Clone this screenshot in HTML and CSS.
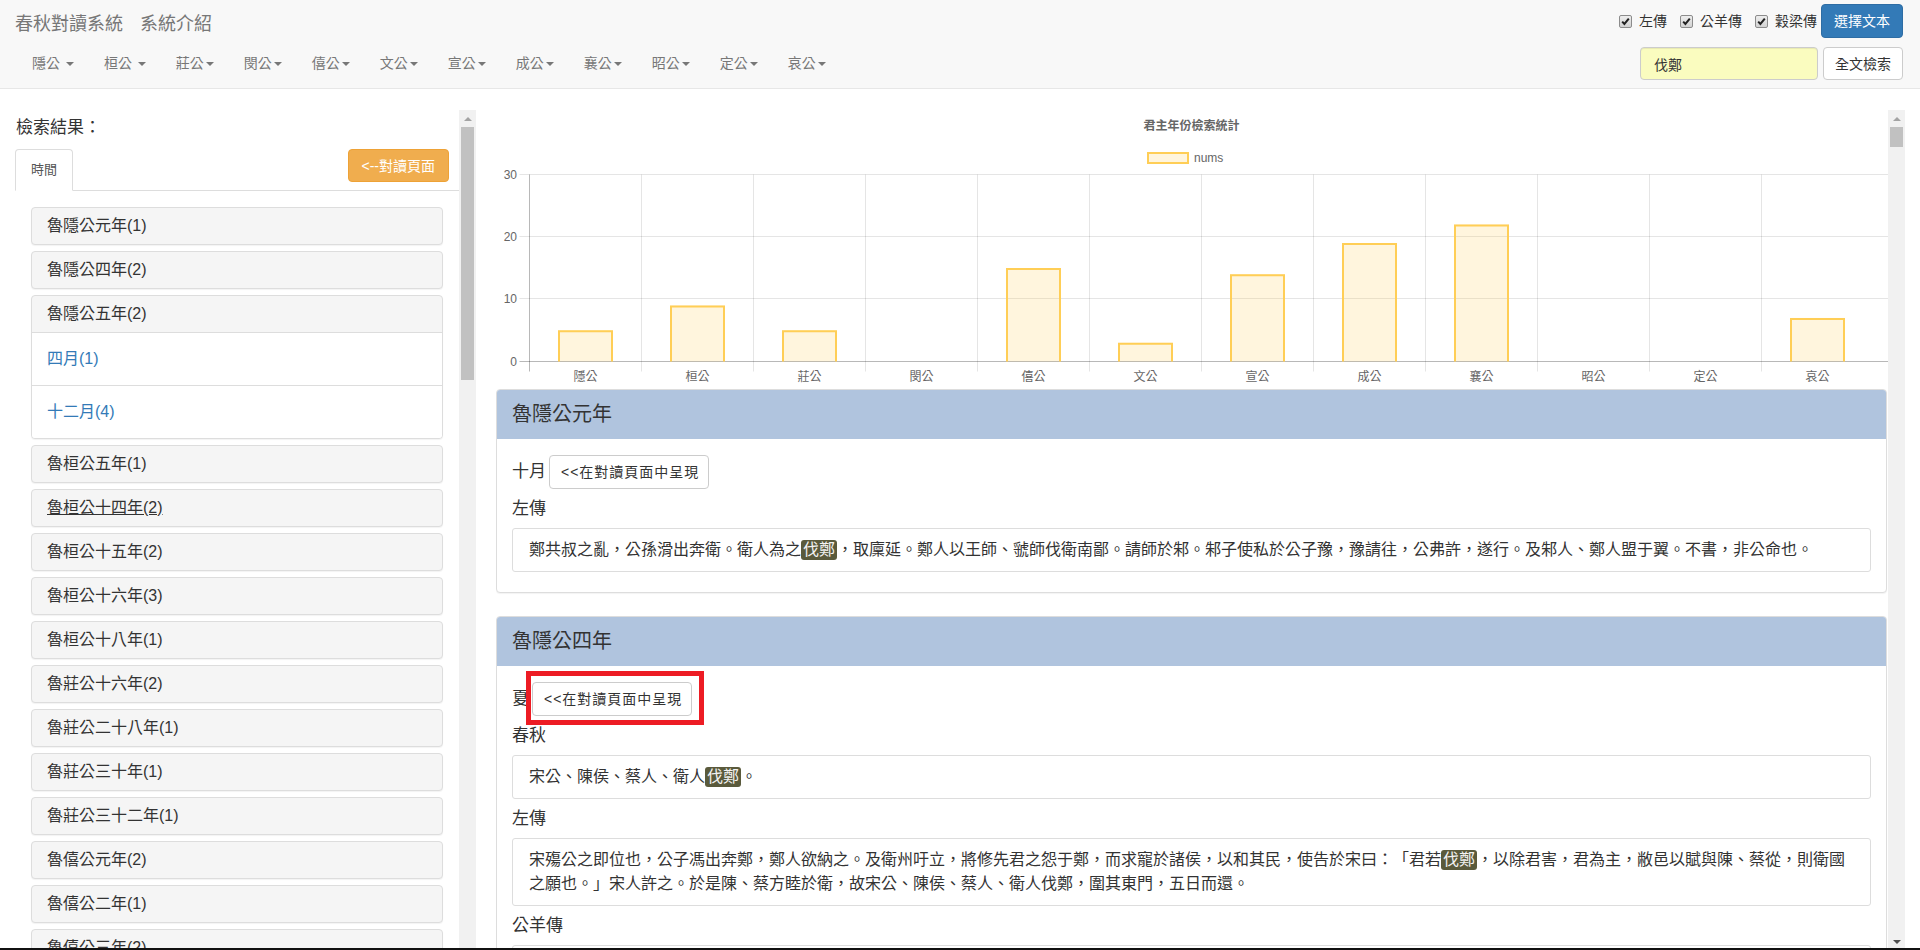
FILE: index.html
```html
<!DOCTYPE html>
<html lang="zh-Hant">
<head>
<meta charset="utf-8">
<title>春秋對讀系統</title>
<link rel="stylesheet" href="styles.css">
</head>
<body>
<header class="navbar">
  <div class="nav-left">
    <div class="brand-row">
      <span class="brand">春秋對讀系統</span>
      <span class="brand-link">系統介紹</span>
    </div>
    <ul class="menu">
      <li>隱公 <span class="caret"></span></li>
      <li>桓公 <span class="caret"></span></li>
      <li>莊公<span class="caret"></span></li>
      <li>閔公<span class="caret"></span></li>
      <li>僖公<span class="caret"></span></li>
      <li>文公<span class="caret"></span></li>
      <li>宣公<span class="caret"></span></li>
      <li>成公<span class="caret"></span></li>
      <li>襄公<span class="caret"></span></li>
      <li>昭公<span class="caret"></span></li>
      <li>定公<span class="caret"></span></li>
      <li>哀公<span class="caret"></span></li>
    </ul>
  </div>
  <div class="nav-right">
    <div class="check-row">
      <label class="chk"><span class="cb"><svg viewBox="0 0 11 11"><path d="M2.2 5.6 L4.4 8 L8.8 2.6" /></svg></span>左傳</label>
      <label class="chk"><span class="cb"><svg viewBox="0 0 11 11"><path d="M2.2 5.6 L4.4 8 L8.8 2.6" /></svg></span>公羊傳</label>
      <label class="chk"><span class="cb"><svg viewBox="0 0 11 11"><path d="M2.2 5.6 L4.4 8 L8.8 2.6" /></svg></span>穀梁傳</label>
      <button class="btn btn-primary">選擇文本</button>
    </div>
    <div class="search-row">
      <input class="search-input" type="text" value="伐鄭">
      <button class="btn btn-search">全文檢索</button>
    </div>
  </div>
</header>

<main class="main">
  <section class="left">
    <div class="left-content">
      <h4 class="result-title">檢索結果：</h4>
      <div class="tabs">
        <div class="tab">時間</div>
        <button class="btn btn-warning">&lt;--對讀頁面</button>
      </div>
      <div class="acc-list">
        <div class="acc"><div class="acc-head">魯隱公元年(1)</div></div>
        <div class="acc"><div class="acc-head">魯隱公四年(2)</div></div>
        <div class="acc">
          <div class="acc-head">魯隱公五年(2)</div>
          <div class="acc-body">
            <div class="acc-row">四月(1)</div>
            <div class="acc-row">十二月(4)</div>
          </div>
        </div>
        <div class="acc"><div class="acc-head">魯桓公五年(1)</div></div>
        <div class="acc"><div class="acc-head"><span class="hovered">魯桓公十四年(2)</span></div></div>
        <div class="acc"><div class="acc-head">魯桓公十五年(2)</div></div>
        <div class="acc"><div class="acc-head">魯桓公十六年(3)</div></div>
        <div class="acc"><div class="acc-head">魯桓公十八年(1)</div></div>
        <div class="acc"><div class="acc-head">魯莊公十六年(2)</div></div>
        <div class="acc"><div class="acc-head">魯莊公二十八年(1)</div></div>
        <div class="acc"><div class="acc-head">魯莊公三十年(1)</div></div>
        <div class="acc"><div class="acc-head">魯莊公三十二年(1)</div></div>
        <div class="acc"><div class="acc-head">魯僖公元年(2)</div></div>
        <div class="acc"><div class="acc-head">魯僖公二年(1)</div></div>
        <div class="acc"><div class="acc-head">魯僖公三年(2)</div></div>
      </div>
    </div>
    <div class="vscroll">
      <div class="sb-btn sb-up"></div>
      <div class="thumb thumb-left"></div>
    </div>
  </section>

  <section class="right">
    <div class="right-content">
      <svg class="chart" viewBox="0 0 1392 279" width="1392" height="279">
        <text class="ct-title" x="695.5" y="16" text-anchor="middle" dominant-baseline="central">君主年份檢索統計</text>
        <rect x="652" y="43" width="40" height="10" fill="#fff5dd" stroke="#ffce56" stroke-width="2"/>
        <text class="ct-label" x="698" y="48" dominant-baseline="central">nums</text>

        <g stroke="rgba(0,0,0,0.1)" stroke-width="1">
          <line x1="23.5" y1="64.5" x2="1392" y2="64.5"/>
          <line x1="23.5" y1="126.5" x2="1392" y2="126.5"/>
          <line x1="23.5" y1="188.5" x2="1392" y2="188.5"/>
          <line x1="145.5" y1="64.5" x2="145.5" y2="261.5"/>
          <line x1="257.5" y1="64.5" x2="257.5" y2="261.5"/>
          <line x1="369.5" y1="64.5" x2="369.5" y2="261.5"/>
          <line x1="481.5" y1="64.5" x2="481.5" y2="261.5"/>
          <line x1="593.5" y1="64.5" x2="593.5" y2="261.5"/>
          <line x1="705.5" y1="64.5" x2="705.5" y2="261.5"/>
          <line x1="817.5" y1="64.5" x2="817.5" y2="261.5"/>
          <line x1="929.5" y1="64.5" x2="929.5" y2="261.5"/>
          <line x1="1041.5" y1="64.5" x2="1041.5" y2="261.5"/>
          <line x1="1153.5" y1="64.5" x2="1153.5" y2="261.5"/>
          <line x1="1265.5" y1="64.5" x2="1265.5" y2="261.5"/>
        </g>
        <g stroke="rgba(0,0,0,0.28)" stroke-width="1">
          <line x1="33.5" y1="64.5" x2="33.5" y2="261.5"/>
          <line x1="23.5" y1="251.5" x2="1392" y2="251.5"/>
        </g>

        <g fill="rgba(255,206,86,0.2)">
          <rect x="62" y="220.3" width="55" height="31.2"/>
          <rect x="174" y="195.4" width="55" height="56.1"/>
          <rect x="286" y="220.3" width="55" height="31.2"/>
          <rect x="510" y="158" width="55" height="93.5"/>
          <rect x="622" y="232.8" width="55" height="18.7"/>
          <rect x="734" y="164.2" width="55" height="87.3"/>
          <rect x="846" y="133.1" width="55" height="118.4"/>
          <rect x="958" y="114.4" width="55" height="137.1"/>
          <rect x="1294" y="207.9" width="55" height="43.6"/>
        </g>
        <g fill="none" stroke="#ffce56" stroke-width="2">
          <path d="M63 251.5 V221.3 H116 V251.5"/>
          <path d="M175 251.5 V196.4 H228 V251.5"/>
          <path d="M287 251.5 V221.3 H340 V251.5"/>
          <path d="M511 251.5 V159 H564 V251.5"/>
          <path d="M623 251.5 V233.8 H676 V251.5"/>
          <path d="M735 251.5 V165.2 H788 V251.5"/>
          <path d="M847 251.5 V134.1 H900 V251.5"/>
          <path d="M959 251.5 V115.4 H1012 V251.5"/>
          <path d="M1295 251.5 V208.9 H1348 V251.5"/>
        </g>

        <g class="ct-label" text-anchor="end" dominant-baseline="central">
          <text x="21" y="64.5">30</text>
          <text x="21" y="126.5">20</text>
          <text x="21" y="188.5">10</text>
          <text x="21" y="251.5">0</text>
        </g>
        <g class="ct-label" text-anchor="middle" dominant-baseline="central">
          <text x="89.5" y="267">隱公</text>
          <text x="201.5" y="267">桓公</text>
          <text x="313.5" y="267">莊公</text>
          <text x="425.5" y="267">閔公</text>
          <text x="537.5" y="267">僖公</text>
          <text x="649.5" y="267">文公</text>
          <text x="761.5" y="267">宣公</text>
          <text x="873.5" y="267">成公</text>
          <text x="985.5" y="267">襄公</text>
          <text x="1097.5" y="267">昭公</text>
          <text x="1209.5" y="267">定公</text>
          <text x="1321.5" y="267">哀公</text>
        </g>
      </svg>

      <div class="panel">
        <div class="panel-heading">魯隱公元年</div>
        <div class="panel-body">
          <div class="time-row">
            <span class="time-label">十月</span>
            <button class="btn btn-show">&lt;&lt;在對讀頁面中呈現</button>
          </div>
          <div class="src-label">左傳</div>
          <div class="text-box">鄭共叔之亂，公孫滑出奔衛。衛人為之<span class="hl">伐鄭</span>，取廩延。鄭人以王師、虢師伐衛南鄙。請師於邾。邾子使私於公子豫，豫請往，公弗許，遂行。及邾人、鄭人盟于翼。不書，非公命也。</div>
        </div>
      </div>

      <div class="panel">
        <div class="panel-heading">魯隱公四年</div>
        <div class="panel-body">
          <div class="time-row">
            <span class="time-label">夏</span>
            <button class="btn btn-show">&lt;&lt;在對讀頁面中呈現</button>
            <div class="annot"></div>
          </div>
          <div class="src-label">春秋</div>
          <div class="text-box">宋公、陳侯、蔡人、衛人<span class="hl">伐鄭</span>。</div>
          <div class="src-label">左傳</div>
          <div class="text-box">宋殤公之即位也，公子馮出奔鄭，鄭人欲納之。及衛州吁立，將修先君之怨于鄭，而求寵於諸侯，以和其民，使告於宋曰：「君若<span class="hl">伐鄭</span>，以除君害，君為主，敝邑以賦與陳、蔡從，則衛國之願也。」宋人許之。於是陳、蔡方睦於衛，故宋公、陳侯、蔡人、衛人伐鄭，圍其東門，五日而還。</div>
          <div class="src-label">公羊傳</div>
          <div class="text-box">宋公、陳侯、蔡人、衛人<span class="hl">伐鄭</span>。</div>
        </div>
      </div>
    </div>
    <div class="vscroll">
      <div class="sb-btn sb-up"></div>
      <div class="thumb thumb-right"></div>
      <div class="sb-fill"></div>
      <div class="sb-btn sb-down"></div>
    </div>
  </section>
</main>
<div class="window-edge"></div>
</body>
</html>
```
FILE: styles.css
```css
* { box-sizing: border-box; }

html, body {
  margin: 0;
  height: 950px;
  overflow: hidden;
}

body {
  font-family: "Liberation Sans", "Noto Sans CJK TC", sans-serif;
  font-size: 14px;
  color: #333;
  background: #fff;
  text-spacing-trim: space-all;
}

/* ---------- navbar ---------- */
.navbar {
  display: flex;
  justify-content: space-between;
  height: 89px;
  background: #f8f8f8;
  border-bottom: 1px solid #e7e7e7;
}

.brand-row {
  display: flex;
  align-items: center;
  height: 48px;
  padding-left: 15px;
  font-size: 18px;
  line-height: 24px;
  color: #777;
}

.brand { margin-right: 17px; }

.menu {
  list-style: none;
  margin: 0;
  padding: 0 0 0 17px;
  display: flex;
  align-items: center;
  height: 30px;
}

.menu li {
  padding: 0 15px;
  font-size: 14px;
  line-height: 20px;
  color: #777;
  white-space: nowrap;
}

.caret {
  display: inline-block;
  width: 0;
  height: 0;
  margin-left: 2px;
  vertical-align: middle;
  border-top: 4px solid #777;
  border-left: 4px solid transparent;
  border-right: 4px solid transparent;
}

.nav-right {
  display: flex;
  flex-direction: column;
  align-items: flex-end;
  padding: 4px 17px 0 0;
}

.check-row {
  display: flex;
  align-items: center;
  height: 34px;
}

.chk {
  display: flex;
  align-items: center;
  gap: 7px;
  margin-left: 13px;
  font-size: 14px;
  line-height: 20px;
  color: #333;
}

.chk:first-child { margin-left: 0; }

.cb {
  display: flex;
  align-items: center;
  justify-content: center;
  width: 13px;
  height: 13px;
  border: 1px solid #8c8c8c;
  border-radius: 2px;
  background: linear-gradient(#eeeeee, #d2d2d2);
}

.cb svg {
  width: 11px;
  height: 11px;
  fill: none;
  stroke: #222;
  stroke-width: 2;
}

.btn {
  height: 34px;
  padding: 0 12px;
  font-family: inherit;
  font-size: 14px;
  line-height: 20px;
  color: #333;
  background: #fff;
  border: 1px solid #ccc;
  border-radius: 4px;
  white-space: nowrap;
}

.btn-primary {
  margin-left: 4px;
  color: #fff;
  background: #337ab7;
  border-color: #2e6da4;
}

.search-row {
  display: flex;
  gap: 5px;
  margin-top: 9px;
}

.search-input {
  width: 178px;
  height: 33px;
  padding: 0 13px;
  font-family: inherit;
  font-size: 14px;
  color: #333;
  background: #fafcbf;
  border: 1px solid #ccc;
  border-radius: 4px;
  box-shadow: inset 0 1px 1px rgba(0, 0, 0, 0.075);
}

.btn-search {
  height: 33px;
  padding: 0 11px;
}

/* ---------- main ---------- */
.main {
  display: flex;
  height: 861px;
}

.left {
  flex: none;
  display: flex;
  width: 476px;
  padding: 21px 0 0 15px;
}

.left-content {
  width: 444px;
  overflow: hidden;
}

.vscroll {
  flex: none;
  display: flex;
  flex-direction: column;
  width: 17px;
  background: #f1f1f1;
}

.sb-btn {
  flex: none;
  display: flex;
  align-items: center;
  justify-content: center;
  height: 17px;
}

.sb-up::before {
  content: "";
  border-left: 4px solid transparent;
  border-right: 4px solid transparent;
  border-bottom: 4px solid #a3a3a3;
}

.sb-down::before {
  content: "";
  border-left: 4px solid transparent;
  border-right: 4px solid transparent;
  border-top: 4px solid #505050;
}

.thumb {
  flex: none;
  margin: 0 2px;
  background: #c1c1c1;
}

.thumb-left { height: 253px; }
.thumb-right { height: 20px; }
.sb-fill { flex: 1; }

.result-title {
  margin: 5px 0 8px 1px;
  font-size: 17px;
  font-weight: normal;
  line-height: 26px;
  color: #333;
}

.tabs {
  display: flex;
  justify-content: space-between;
  align-items: flex-start;
  height: 42px;
  border-bottom: 1px solid #ddd;
}

.tab {
  height: 42px;
  padding: 0 15px;
  font-size: 13px;
  line-height: 40px;
  color: #555;
  background: #fff;
  border: 1px solid #ddd;
  border-bottom-color: transparent;
  border-radius: 4px 4px 0 0;
}

.btn-warning {
  height: 33px;
  margin-right: 10px;
  padding: 0 13px;
  color: #fff;
  background: #f0ad4e;
  border-color: #eea236;
}

.acc-list {
  padding: 16px 16px 0;
}

.acc {
  margin-bottom: 6px;
  background: #f5f5f5;
  border: 1px solid #ddd;
  border-radius: 4px;
  box-shadow: 0 1px 1px rgba(0, 0, 0, 0.05);
}

.acc-head {
  height: 36px;
  padding: 0 15px;
  font-size: 16px;
  line-height: 36px;
  color: #333;
  white-space: nowrap;
}

.hovered { text-decoration: underline; }

.acc-body {
  background: #fff;
  border-radius: 0 0 3px 3px;
}

.acc-row {
  height: 53px;
  padding: 0 15px;
  font-size: 16px;
  line-height: 52px;
  color: #337ab7;
  border-top: 1px solid #ddd;
}

.right {
  flex: 1;
  min-width: 0;
  display: flex;
  padding: 21px 15px 0 20px;
}

.right-content {
  flex: 1;
  min-width: 0;
  overflow: hidden;
}

/* ---------- chart ---------- */
.chart {
  display: block;
  width: 1392px;
  height: 279px;
}

.ct-title {
  font-family: "Liberation Sans", "Noto Sans CJK TC", sans-serif;
  font-size: 12px;
  font-weight: bold;
  fill: #666;
}

.ct-label {
  font-family: "Liberation Sans", "Noto Sans CJK TC", sans-serif;
  font-size: 12px;
  fill: #666;
}

/* ---------- result panels ---------- */
.panel {
  margin: 0 1px 23px 0;
  background: #fff;
  border: 1px solid #ddd;
  border-radius: 4px;
  box-shadow: 0 1px 1px rgba(0, 0, 0, 0.05);
}

.panel-heading {
  height: 49px;
  padding: 0 15px;
  font-size: 20px;
  line-height: 49px;
  color: #333;
  background: #b0c4de;
  border-radius: 3px 3px 0 0;
}

.panel-body {
  padding: 16px 15px 20px;
}

.time-row {
  position: relative;
  display: flex;
  align-items: center;
  height: 34px;
}

.time-label {
  font-size: 17px;
  line-height: 24px;
  color: #333;
}

.btn-show {
  margin-left: 3px;
  padding: 0 9px 0 11px;
  letter-spacing: 1px;
}

.annot {
  position: absolute;
  left: 14px;
  top: -11px;
  width: 178px;
  height: 54px;
  border: 5px solid #ed1c24;
  pointer-events: none;
}

.src-label {
  margin: 8px 0 7px;
  font-size: 17px;
  line-height: 24px;
  color: #333;
}

.text-box {
  padding: 9px 16px;
  font-size: 16px;
  line-height: 24px;
  color: #333;
  border: 1px solid #ddd;
  border-radius: 3px;
}

.hl {
  display: inline-block;
  padding: 0 2px;
  line-height: 20px;
  color: #f2f2f2;
  background: #5a5a3c;
  border-radius: 3px;
}

.window-edge {
  position: fixed;
  left: 0;
  right: 0;
  bottom: 0;
  height: 2px;
  background: #111;
}
```
